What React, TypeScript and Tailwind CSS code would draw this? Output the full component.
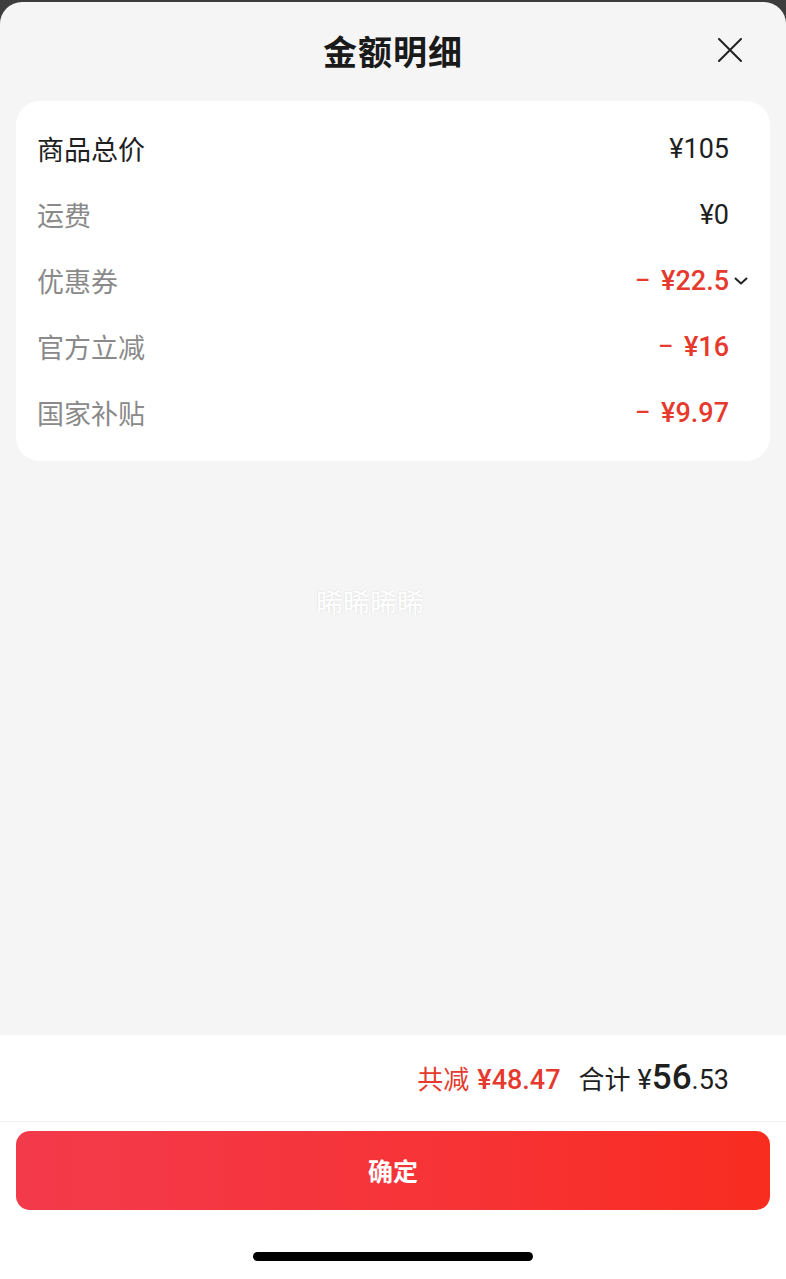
import React from 'react';

type Row = {
  label: string;
  value: string;
  strong?: boolean;
  discount?: boolean;
  expandable?: boolean;
};

const rows: Row[] = [
  { label: '商品总价', value: '¥105', strong: true },
  { label: '运费', value: '¥0' },
  { label: '优惠券', value: '¥22.5', discount: true, expandable: true },
  { label: '官方立减', value: '¥16', discount: true },
  { label: '国家补贴', value: '¥9.97', discount: true },
];

const cjk = "font-['Noto_Sans_CJK_SC',sans-serif]";
const num = "font-['Roboto','Noto_Sans_CJK_SC',sans-serif]";

const App: React.FC = () => {
  return (
    <div className="bg-[#3d3d3d] pt-[2px]">
      <div className={`h-[1277px] flex flex-col bg-[#f5f5f5] rounded-t-[22px] overflow-hidden ${cjk}`}>
        {/* header */}
        <div className="relative h-[96px] flex items-center justify-center">
          <h1 className="text-[34px] font-bold text-[#1a1a1a] tracking-[1px]">金额明细</h1>
          <button className="absolute right-[44px] top-[36px] w-[24px] h-[24px]">
            <svg viewBox="0 0 24 24" className="w-[24px] h-[24px]" fill="none" stroke="#222" strokeWidth="2" strokeLinecap="round">
              <path d="M1 1L23 23M23 1L1 23" />
            </svg>
          </button>
        </div>

        {/* amount card */}
        <div className="mx-[16px] mt-[3px] bg-white rounded-[24px] pt-[15px] pb-[15px] pl-[21px] pr-[41px]">
          {rows.map(row => (
            <div key={row.label} className="h-[66px] flex items-center justify-between">
              <span className={`text-[27px] ${row.strong ? 'text-[#1f1f1f]' : 'text-[#8a8a8a]'}`}>
                {row.label}
              </span>
              <div className="flex items-center">
                {row.discount && (
                  <span className={`${num} text-[23px] font-medium text-[#e53a2d] mr-[11px]`}>–</span>
                )}
                <span
                  className={`${num} text-[27px] ${
                    row.discount ? 'text-[#e53a2d] font-medium' : 'text-[#1f1f1f]'
                  }`}
                >
                  {row.value}
                </span>
                {row.expandable && (
                  <svg viewBox="0 0 14 8" className="w-[14px] h-[8px] ml-[5px] mr-[-19px]" fill="none" stroke="#222" strokeWidth="2" strokeLinecap="round" strokeLinejoin="round">
                    <path d="M1.5 1.5L7 6.5L12.5 1.5" />
                  </svg>
                )}
              </div>
            </div>
          ))}
        </div>

        {/* watermark area */}
        <div className="flex-1 pt-[121px]">
          <span className="ml-[316px] text-[27px] text-white [text-shadow:0_0_2px_rgba(0,0,0,0.12)]">晞晞晞晞</span>
        </div>

        {/* footer */}
        <div className="bg-white">
          <div className="h-[87px] flex items-center justify-end pr-[57px] border-b border-[#efefef]">
            <div className="flex items-baseline">
              <span className="text-[26px] text-[#e53a2d]">共减</span>
              <span className={`${num} text-[27px] font-medium text-[#e53a2d] ml-[8px]`}>¥48.47</span>
              <span className="text-[26px] text-[#1f1f1f] ml-[18px]">合计</span>
              <span className={`${num} text-[27px] text-[#1f1f1f] ml-[7px]`}>¥</span>
              <span className={`${num} text-[35px] font-medium text-[#1f1f1f]`}>56</span>
              <span className={`${num} text-[27px] text-[#1f1f1f]`}>.53</span>
            </div>
          </div>
          <div className="px-[16px] pt-[9px]">
            <button className="w-full h-[79px] rounded-[14px] bg-gradient-to-r from-[#f33a4b] to-[#f92c1f] text-white text-[25px] font-bold">
              确定
            </button>
          </div>
          <div className="h-[69px] flex justify-center pt-[42px]">
            <div className="w-[280px] h-[9px] rounded-full bg-black" />
          </div>
        </div>
      </div>
    </div>
  );
};

export default App;
